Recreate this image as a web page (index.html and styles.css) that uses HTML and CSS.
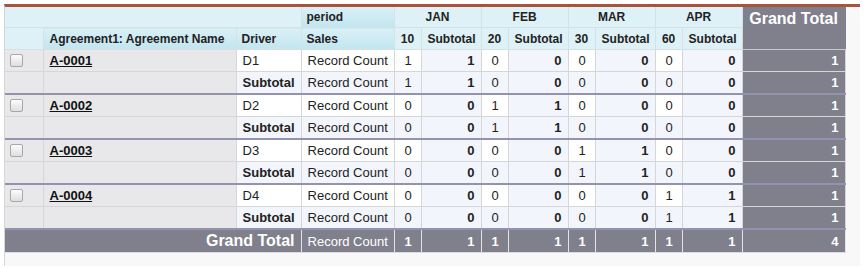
FILE: index.html
```html
<!DOCTYPE html>
<html>
<head>
<meta charset="utf-8">
<link rel="stylesheet" href="styles.css">
</head>
<body>
<div class="frame">
<table class="matrix">
  <colgroup>
    <col class="c-chk"><col class="c-agr"><col class="c-drv"><col class="c-sales">
    <col class="c-m"><col class="c-s"><col class="c-m"><col class="c-s">
    <col class="c-m"><col class="c-s"><col class="c-m"><col class="c-s">
    <col class="c-gt">
  </colgroup>
  <thead>
    <tr class="h1">
      <th colspan="3" class="hl"></th>
      <th class="hd left">period</th>
      <th colspan="2" class="hl">JAN</th>
      <th colspan="2" class="hl">FEB</th>
      <th colspan="2" class="hl">MAR</th>
      <th colspan="2" class="hl">APR</th>
      <th rowspan="2" class="gt-head">Grand Total</th>
    </tr>
    <tr class="h2">
      <th class="hl"></th>
      <th class="hd left agr">Agreement1: Agreement Name</th>
      <th class="hd left">Driver</th>
      <th class="hd left">Sales</th>
      <th class="hl">10</th><th class="hl">Subtotal</th>
      <th class="hl">20</th><th class="hl">Subtotal</th>
      <th class="hl">30</th><th class="hl">Subtotal</th>
      <th class="hl">60</th><th class="hl">Subtotal</th>
    </tr>
  </thead>
  <tbody>
    <tr class="data">
      <td class="lab"><span class="cb"></span></td>
      <td class="lab name"><a>A-0001</a></td>
      <td class="drv">D1</td><td class="meas">Record Count</td>
      <td class="n">1</td><td class="st">1</td><td class="n">0</td><td class="st">0</td>
      <td class="n">0</td><td class="st">0</td><td class="n">0</td><td class="st">0</td>
      <td class="gt">1</td>
    </tr>
    <tr class="sub">
      <td class="lab"></td><td class="lab"></td>
      <td class="drv sublab">Subtotal</td><td class="meas">Record Count</td>
      <td class="n">1</td><td class="st">1</td><td class="n">0</td><td class="st">0</td>
      <td class="n">0</td><td class="st">0</td><td class="n">0</td><td class="st">0</td>
      <td class="gt">1</td>
    </tr>
    <tr class="data grp">
      <td class="lab"><span class="cb"></span></td>
      <td class="lab name"><a>A-0002</a></td>
      <td class="drv">D2</td><td class="meas">Record Count</td>
      <td class="n">0</td><td class="st">0</td><td class="n">1</td><td class="st">1</td>
      <td class="n">0</td><td class="st">0</td><td class="n">0</td><td class="st">0</td>
      <td class="gt">1</td>
    </tr>
    <tr class="sub">
      <td class="lab"></td><td class="lab"></td>
      <td class="drv sublab">Subtotal</td><td class="meas">Record Count</td>
      <td class="n">0</td><td class="st">0</td><td class="n">1</td><td class="st">1</td>
      <td class="n">0</td><td class="st">0</td><td class="n">0</td><td class="st">0</td>
      <td class="gt">1</td>
    </tr>
    <tr class="data grp">
      <td class="lab"><span class="cb"></span></td>
      <td class="lab name"><a>A-0003</a></td>
      <td class="drv">D3</td><td class="meas">Record Count</td>
      <td class="n">0</td><td class="st">0</td><td class="n">0</td><td class="st">0</td>
      <td class="n">1</td><td class="st">1</td><td class="n">0</td><td class="st">0</td>
      <td class="gt">1</td>
    </tr>
    <tr class="sub">
      <td class="lab"></td><td class="lab"></td>
      <td class="drv sublab">Subtotal</td><td class="meas">Record Count</td>
      <td class="n">0</td><td class="st">0</td><td class="n">0</td><td class="st">0</td>
      <td class="n">1</td><td class="st">1</td><td class="n">0</td><td class="st">0</td>
      <td class="gt">1</td>
    </tr>
    <tr class="data grp">
      <td class="lab"><span class="cb"></span></td>
      <td class="lab name"><a>A-0004</a></td>
      <td class="drv">D4</td><td class="meas">Record Count</td>
      <td class="n">0</td><td class="st">0</td><td class="n">0</td><td class="st">0</td>
      <td class="n">0</td><td class="st">0</td><td class="n">1</td><td class="st">1</td>
      <td class="gt">1</td>
    </tr>
    <tr class="sub">
      <td class="lab"></td><td class="lab"></td>
      <td class="drv sublab">Subtotal</td><td class="meas">Record Count</td>
      <td class="n">0</td><td class="st">0</td><td class="n">0</td><td class="st">0</td>
      <td class="n">0</td><td class="st">0</td><td class="n">1</td><td class="st">1</td>
      <td class="gt">1</td>
    </tr>
    <tr class="total grp">
      <td colspan="3" class="gtlab">Grand Total</td>
      <td class="meas">Record Count</td>
      <td class="n">1</td><td class="st">1</td><td class="n">1</td><td class="st">1</td>
      <td class="n">1</td><td class="st">1</td><td class="n">1</td><td class="st">1</td>
      <td class="st">4</td>
    </tr>
  </tbody>
</table>
</div>
</body>
</html>
```
FILE: styles.css
```css
html, body {
  margin: 0;
  padding: 0;
  background: #ffffff;
}
body {
  padding: 4px;
  font-family: "Liberation Sans", Arial, sans-serif;
  font-size: 13px;
  color: #222;
}
.frame {
  width: 856px;
  height: 262px;
  border-top: 3px solid #a9533f;
  border-left: 1px solid #d6d6d6;
  background: #f8f8f8;
  box-sizing: border-box;
}
.matrix {
  border-collapse: collapse;
  table-layout: fixed;
  width: 840px;
}
.c-chk { width: 38px; }
.c-agr { width: 193px; }
.c-drv { width: 65px; }
.c-sales { width: 93px; }
.c-m { width: 27px; }
.c-s { width: 60px; }
.c-gt { width: 103px; }

.matrix th, .matrix td {
  padding: 0 6px;
  white-space: nowrap;
  overflow: hidden;
  border: 1px solid #d6d6d6;
}
.matrix th {
  font-size: 12px;
  font-weight: bold;
  color: #222;
  text-align: center;
  border-color: #d4e2e7;
}
.h1 th { height: 20px; border-top: none; }
.h2 th { height: 21px; }
.matrix th:first-child, .matrix td:first-child { border-left: none; }
.hl { background: #ddf1f7; }
.hd { background: linear-gradient(#daf0f6, #c2e5ef); }
.matrix th.left { text-align: left; padding-left: 5px; }
.matrix th.agr { padding-left: 6px; }
.gt-head {
  background: #80808d;
  color: #fff !important;
  font-size: 16px !important;
  vertical-align: top;
  padding-top: 3px !important;
  border-color: #80808d #80808d #c8c8d0 #d6d6d6 !important;
}

tbody td { height: 21px; }
.lab {
  background: #e8e8ea;
  border-color: #d8d8dc;
}
.lab + .lab { border-left-color: #e8e8ea; }
.name { padding-left: 5px; }
.name a {
  font-weight: bold;
  color: #111;
  text-decoration: underline;
}
.cb {
  display: block;
  width: 11px;
  height: 11px;
  margin-left: -1px;
  border: 1px solid #a8a8a8;
  border-radius: 2px;
  background: linear-gradient(#fcfcfc, #dedede);
}
.drv, .meas { padding-left: 5px; background: #fff; }
.sublab {
  font-weight: bold;
  text-align: right;
  padding-right: 5px;
}
.n { text-align: center; padding: 0 0 0 1px !important; background: #fff; }
.st { text-align: right; background: #f2f5fc; font-weight: bold; }
.sub td.drv, .sub td.meas, .sub td.n { background: #f2f5fc; }
.gt {
  background: #80808d;
  color: #fff;
  font-weight: bold;
  text-align: right;
  border-color: #c8c8d0 #80808d #c8c8d0 #d6d6d6;
}
.grp td { border-top: 2px solid #9393af; }
.total td {
  height: 22px;
  background: #80808d !important;
  color: #fff;
  font-weight: bold;
  border-color: #9393af #e4e4e8 #dcdce0 #e4e4e8;
  border-top-width: 2px;
}
.total td.meas { font-weight: normal; }
.total td.gtlab {
  text-align: right;
  font-size: 16px;
  padding-right: 6px;
}
```
